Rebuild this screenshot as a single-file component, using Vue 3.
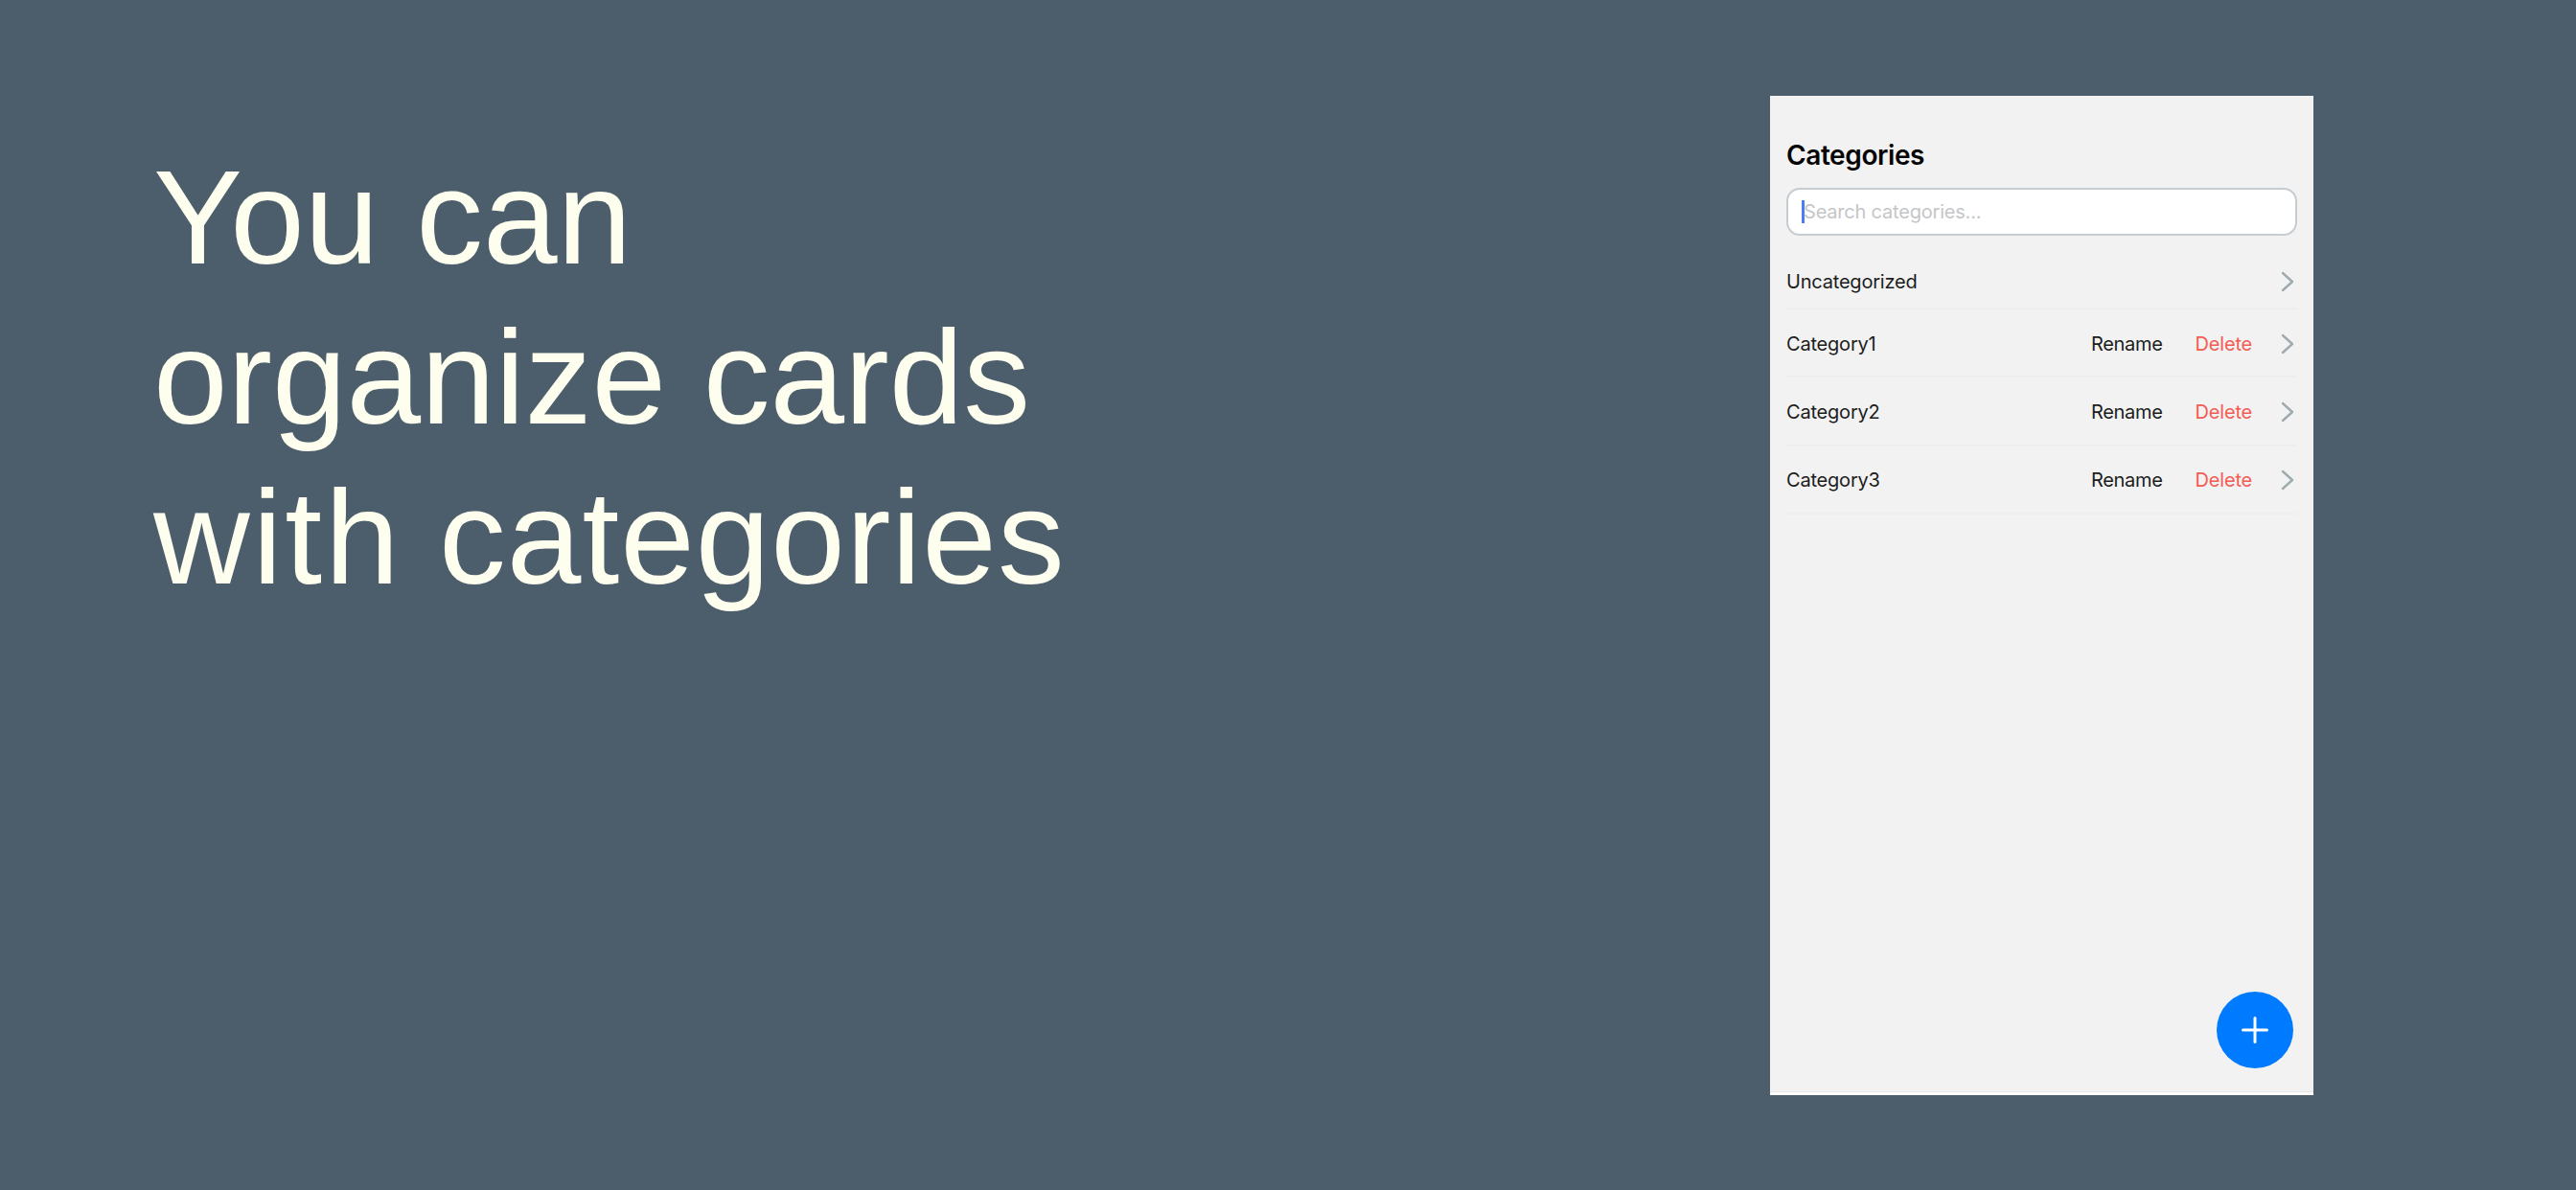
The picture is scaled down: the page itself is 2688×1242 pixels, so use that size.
<script setup>
const rows = [
  { name: 'Category1' },
  { name: 'Category2' },
  { name: 'Category3' },
]
</script>

<template>
  <div class="page">
    <section class="hero">
      <h1 class="headline">You can<br />organize cards<br /><span class="word-with">with</span> <span class="word-cats">categories</span></h1>
    </section>
    <section class="phone">
      <div class="content">
        <h2 class="title">Categories</h2>
        <div class="search">
          <span class="caret"></span>
          <input class="search-input" type="text" placeholder="Search categories..." />
        </div>
        <ul class="list">
          <li class="row row-first">
            <span class="name">Uncategorized</span>
            <svg class="chevron" viewBox="0 0 14 22" fill="none"><path d="M2 2l10 9-10 9" /></svg>
          </li>
          <li v-for="row in rows" :key="row.name" class="row">
            <span class="name">{{ row.name }}</span>
            <span class="action">Rename</span>
            <span class="action danger">Delete</span>
            <svg class="chevron" viewBox="0 0 14 22" fill="none"><path d="M2 2l10 9-10 9" /></svg>
          </li>
        </ul>
      </div>
      <button class="fab" type="button" aria-label="Add category">
        <svg viewBox="0 0 28 28" width="28" height="28"><path d="M14 1.5v25M1.5 14h25" /></svg>
      </button>
      <div class="bottom-edge"></div>
    </section>
  </div>
</template>

<style>
html, body { margin: 0; background: #4c5d6b; }
</style>

<style scoped>
.page {
  display: flex;
  width: 2688px;
  height: 1242px;
  background: #4c5d6b;
  overflow: hidden;
}
.hero {
  flex: 0 0 1847px;
  box-sizing: border-box;
  padding: 144px 0 0 160px;
}
.headline {
  margin: 0;
  font-family: "Liberation Sans", Arial, sans-serif;
  font-weight: 400;
  font-size: 139.5px;
  line-height: 167px;
  color: #fdfeee;
}
.word-with {
  letter-spacing: 2.8px;
}
.word-cats {
  letter-spacing: 1px;
}
.phone {
  position: relative;
  box-sizing: border-box;
  flex: 0 0 567px;
  height: 1043px;
  margin-top: 100px;
  background: #f2f2f2;
  font-family: Inter, "Noto Sans", sans-serif;
}
.content {
  padding: 44px 17px 0;
}
.title {
  margin: 0 0 16px;
  font-size: 28px;
  line-height: 36px;
  font-weight: 600;
  letter-spacing: -0.4px;
  color: #050505;
}
.search {
  position: relative;
  box-sizing: border-box;
  height: 50px;
  background: #fff;
  border: 2px solid #c5cdd2;
  border-radius: 14px;
}
.caret {
  position: absolute;
  left: 14px;
  top: 11px;
  width: 3px;
  height: 24px;
  background: #4a7cf6;
}
.search-input {
  box-sizing: border-box;
  width: 100%;
  height: 100%;
  padding: 0 16px;
  border: 0;
  outline: 0;
  background: transparent;
  font-family: inherit;
  font-size: 20px;
  letter-spacing: -0.2px;
}
.search-input::placeholder {
  color: #c5c6c8;
  opacity: 1;
}
.list {
  list-style: none;
  margin: 0;
  padding: 0;
}
.row {
  display: flex;
  align-items: center;
  box-sizing: border-box;
  height: 71.3px;
  padding: 2px 3px 0 0;
  border-bottom: 2px solid #eeeeee;
  font-size: 20px;
  letter-spacing: -0.2px;
  color: #1c1c1c;
}
.row-first {
  height: 77px;
  padding-top: 20px;
}
.name {
  flex: 1;
}
.action {
  margin-right: 34px;
  letter-spacing: -0.3px;
}
.danger {
  margin-right: 30px;
  letter-spacing: -0.2px;
  color: #f25c54;
}
.chevron {
  flex: none;
  width: 14px;
  height: 22px;
}
.chevron path {
  stroke: #9fabae;
  stroke-width: 2.4;
  stroke-linecap: round;
  stroke-linejoin: round;
}
.fab {
  position: absolute;
  right: 21px;
  bottom: 28px;
  display: flex;
  align-items: center;
  justify-content: center;
  width: 80px;
  height: 80px;
  padding: 0;
  border: 0;
  border-radius: 50%;
  background: #007aff;
}
.fab path {
  fill: none;
  stroke: #fff;
  stroke-width: 3;
  stroke-linecap: round;
}
.bottom-edge {
  position: absolute;
  left: 0;
  right: 0;
  bottom: 0;
  height: 3px;
  background: #fff;
  border-top: 1px solid #e6e6e6;
}
</style>
